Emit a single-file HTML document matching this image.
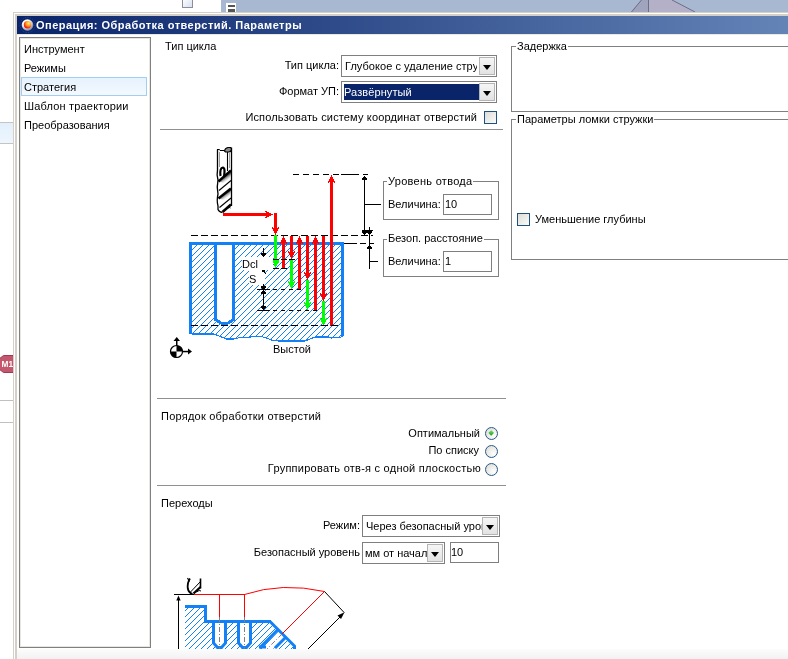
<!DOCTYPE html>
<html><head><meta charset="utf-8">
<style>
*{margin:0;padding:0;box-sizing:border-box}
html,body{width:788px;height:659px;overflow:hidden;background:#fff;position:relative;font-family:"Liberation Sans",sans-serif;font-size:11px;color:#000}
.a{position:absolute}
.t{position:absolute;white-space:nowrap;line-height:13px;height:13px}
.r{text-align:right}
.combo{position:absolute;border:1px solid #7f7f7f;background:#fff}
.btn{position:absolute;top:1px;right:1px;width:16px;bottom:1px;border:1px solid #b5b5b5;background:linear-gradient(#f6f6f6,#e2e2e2)}
.btn:after{content:"";position:absolute;left:3px;top:7px;border-left:4.5px solid transparent;border-right:4.5px solid transparent;border-top:5px solid #000}
.gb{position:absolute;border:1px solid #808080}
.gl{position:absolute;background:#fff;padding:0 1px;white-space:nowrap;line-height:13px}
.cb{position:absolute;width:13px;height:13px;border:1px solid #1c5180;background:linear-gradient(135deg,#dcdcd7,#fbfbf9)}
.rad{position:absolute;width:13px;height:13px;border-radius:50%;border:1.6px solid #2a5888;background:radial-gradient(circle at 70% 70%,#fff,#d8d8d2)}
.sep{position:absolute;height:1px;background:#909090}
.inp{position:absolute;border:1px solid #7f7f7f;background:#fff}
</style></head><body>
<div id="root" style="position:absolute;left:0;top:0;width:788px;height:659px;will-change:transform;overflow:hidden">

<!-- background outside window -->
<div class="a" style="left:221px;top:0;width:567px;height:12px;background:#a8b8d0"></div>
<svg class="a" style="left:0;top:0" width="788" height="12">
  <polygon points="631,12 641,0 648,0 648,12" fill="#a0a4bc"/>
  <polygon points="648,0 672,0 695,12 648,12" fill="#b4b0c8"/>
  <line x1="631.5" y1="12" x2="641.5" y2="0" stroke="#6a6e88" stroke-width="1"/>
  <line x1="648.5" y1="0" x2="648.5" y2="12" stroke="#6a6e88" stroke-width="1"/>
  <line x1="672" y1="0" x2="695" y2="12" stroke="#6a6e88" stroke-width="1"/>
</svg>
<div class="a" style="left:182px;top:-2px;width:11px;height:10px;border:1px solid #8c8c9c;background:linear-gradient(135deg,#fff,#d8e0f0)"></div>
<div class="a" style="left:226px;top:3px;width:10px;height:9px;background:#fff"></div>
<div class="a" style="left:228px;top:5px;width:7px;height:2px;background:#555"></div>
<div class="a" style="left:228px;top:9px;width:7px;height:3px;background:#555"></div>
<div class="a" style="left:0;top:122px;width:13px;height:22px;background:linear-gradient(#e2f0fc,#eef6fd);border-top:1px solid #c4c4c4;border-bottom:1px solid #c4c4c4"></div>
<svg class="a" style="left:0;top:354px" width="13" height="20">
  <polygon points="-1,5 3.5,1.5 14,1.5 14,18.5 3.5,18.5 -1,15" fill="#c4566e" stroke="#9c3c54" stroke-width="1"/>
  <text x="1.6" y="12.8" font-family="Liberation Sans" font-weight="bold" font-size="8.3" fill="#fff">M1</text>
</svg>
<div class="a" style="left:0;top:400px;width:13px;height:1px;background:#c0c0c0"></div>
<div class="a" style="left:0;top:422px;width:13px;height:1px;background:#c0c0c0"></div>

<!-- window frame -->
<div class="a" style="left:13px;top:12px;width:775px;height:647px;background:#d4d0c8"></div>
<div class="a" style="left:14px;top:13px;width:774px;height:646px;background:#fff"></div>
<div class="a" style="left:15px;top:14px;width:773px;height:645px;background:#d4d0c8"></div>
<div class="a" style="left:17px;top:16px;width:771px;height:643px;background:#fff"></div>
<div class="a" style="left:17px;top:34px;width:771px;height:1px;background:#ece9e0"></div>

<!-- title bar -->
<div class="a" style="left:17px;top:16px;width:771px;height:18px;background:linear-gradient(90deg,#0a246a 0px,#a6caf0 1340px)"></div>
<svg class="a" style="left:17px;top:16px" width="20" height="18">
  <defs>
    <radialGradient id="ball" cx="0.65" cy="0.3" r="0.75">
      <stop offset="0" stop-color="#fff070"/><stop offset="0.45" stop-color="#ff9a20"/><stop offset="1" stop-color="#e80000"/>
    </radialGradient>
    <radialGradient id="ring" cx="0.4" cy="0.35" r="0.6">
      <stop offset="0.5" stop-color="#ffffff"/><stop offset="1" stop-color="#8a96b4"/>
    </radialGradient>
  </defs>
  <circle cx="10.5" cy="9" r="7.5" fill="none" stroke="#3a5090" stroke-width="0.8" stroke-dasharray="1 1.5"/>
  <circle cx="10.5" cy="9" r="5.8" fill="url(#ring)"/>
  <circle cx="10.5" cy="8.8" r="3.7" fill="url(#ball)"/>
</svg>
<div class="t" style="left:36px;top:19px;color:#fff;font-weight:bold;letter-spacing:0.47px">Операция: Обработка отверстий. Параметры</div>

<!-- list box -->
<div class="a" style="left:19px;top:37px;width:132px;height:611px;border:1px solid #808080;background:#fff">
  <div class="a" style="left:0;top:0;right:0;bottom:0;border:1px solid #e8e6df"></div>
</div>
<div class="a" style="left:21px;top:77px;width:126px;height:19px;border:1px solid #a4cdf4;background:linear-gradient(#e6f2fd,#f3f9fe)"></div>
<div class="t" style="left:24px;top:43px">Инструмент</div>
<div class="t" style="left:24px;top:62px">Режимы</div>
<div class="t" style="left:24px;top:81px">Стратегия</div>
<div class="t" style="left:24px;top:100px;letter-spacing:0.18px">Шаблон траектории</div>
<div class="t" style="left:24px;top:119px">Преобразования</div>

<!-- Тип цикла -->
<div class="t" style="left:165px;top:40px">Тип цикла</div>
<div class="t r" style="left:200px;width:139px;top:59px">Тип цикла:</div>
<div class="combo" style="left:341px;top:55px;width:156px;height:22px"><div class="t" style="left:3px;top:4px;width:132px;overflow:hidden;letter-spacing:0.04px">Глубокое с удаление стружки</div><div class="btn"></div></div>
<div class="t r" style="left:200px;width:139px;top:85px">Формат УП:</div>
<div class="combo" style="left:341px;top:81px;width:156px;height:22px"><div class="a" style="left:2px;top:2px;width:135px;height:16px;background:#0a246a"></div><div class="t" style="left:2px;top:4px;color:#fff;letter-spacing:0.1px">Развёрнутый</div><div class="btn"></div></div>
<div class="t r" style="left:200px;width:277px;top:111px;letter-spacing:0.15px">Использовать систему координат отверстий</div>
<div class="cb" style="left:484px;top:111px"></div>
<div class="sep" style="left:160px;top:129px;width:343px"></div>

<!-- Diagram -->
<svg class="a" style="left:0;top:0" width="788" height="659">
<g shape-rendering="crispEdges">
<defs><pattern id="hatch" patternUnits="userSpaceOnUse" x="0" y="0" width="6" height="6"><rect x="0" y="3" width="1" height="1" fill="#1480f6"/><rect x="1" y="2" width="1" height="1" fill="#1480f6"/><rect x="2" y="1" width="1" height="1" fill="#1480f6"/><rect x="3" y="0" width="1" height="1" fill="#1480f6"/><rect x="4" y="5" width="1" height="1" fill="#1480f6"/><rect x="5" y="4" width="1" height="1" fill="#1480f6"/></pattern></defs>
<polygon points="189,242 344,242 344,335 343,336 340,337.5 331,338 329,337 315,337 305,341 279,341 273,340.5 265,337.5 261,336.5 240,337.5 234,339 226.5,339 214,334 192,334 190,333.5" fill="url(#hatch)" shape-rendering="crispEdges"/>
<polyline points="343,336 340,337.5 331,338 329,337 315,337 305,341 279,341 273,340.5 265,337.5 261,336.5 240,337.5 234,339 226.5,339 214,334 192,334 190,333.5" fill="none" stroke="#1480f6" stroke-width="1.1"/>
<path d="M217 245 V319 L223 322.5 H226 L232 319 V245 Z" fill="#fff"/>
<path d="M215.5 244 V319.5 L221 323 H228 L233.5 319.5 V244" fill="none" stroke="#1480f6" stroke-width="3"/>
<rect x="189" y="242" width="155" height="3" fill="#1480f6"/>
<rect x="189" y="242" width="3" height="92" fill="#1480f6"/>
<rect x="341" y="242" width="3" height="94" fill="#1480f6"/>
<rect x="191" y="235" width="7" height="1" fill="#000"/>
<rect x="201" y="235" width="7" height="1" fill="#000"/>
<rect x="211" y="235" width="7" height="1" fill="#000"/>
<rect x="221" y="235" width="7" height="1" fill="#000"/>
<rect x="231" y="235" width="7" height="1" fill="#000"/>
<rect x="241" y="235" width="7" height="1" fill="#000"/>
<rect x="251" y="235" width="7" height="1" fill="#000"/>
<rect x="261" y="235" width="7" height="1" fill="#000"/>
<rect x="271" y="235" width="7" height="1" fill="#000"/>
<rect x="281" y="235" width="7" height="1" fill="#000"/>
<rect x="291" y="235" width="7" height="1" fill="#000"/>
<rect x="301" y="235" width="7" height="1" fill="#000"/>
<rect x="311" y="235" width="7" height="1" fill="#000"/>
<rect x="321" y="235" width="7" height="1" fill="#000"/>
<rect x="331" y="235" width="7" height="1" fill="#000"/>
<rect x="341" y="235" width="7" height="1" fill="#000"/>
<rect x="351" y="235" width="7" height="1" fill="#000"/>
<rect x="361" y="235" width="7" height="1" fill="#000"/>
<rect x="371" y="235" width="2" height="1" fill="#000"/>
<rect x="293" y="174" width="6" height="1" fill="#000"/>
<rect x="303" y="174" width="6" height="1" fill="#000"/>
<rect x="313" y="174" width="6" height="1" fill="#000"/>
<rect x="323" y="174" width="6" height="1" fill="#000"/>
<rect x="333" y="174" width="6" height="1" fill="#000"/>
<rect x="343" y="174" width="6" height="1" fill="#000"/>
<rect x="353" y="174" width="6" height="1" fill="#000"/>
<rect x="363" y="174" width="5" height="1" fill="#000"/>
<rect x="344" y="243" width="13" height="1" fill="#000"/>
<rect x="360" y="243" width="6" height="1" fill="#000"/>
<rect x="369" y="243" width="5" height="1" fill="#000"/>
<rect x="242" y="257" width="31" height="13" fill="#fff"/>
<rect x="249" y="270" width="16" height="15" fill="#fff"/>
<rect x="223" y="213" width="47" height="3" fill="#ff0000"/>
<path d="M265 211h1v1h-1zM265 213h1v3h-1zM265 217h1v1h-1zM266 211h1v7h-1zM267 212h1v5h-1zM268 212h1v5h-1zM269 213h1v3h-1zM270 213h1v3h-1zM271 214h1v1h-1zM272 214h1v1h-1z" fill="#ff0000"/>
<rect x="274" y="213" width="3" height="19" fill="#ff0000"/>
<path d="M272 227h1v1h-1zM274 227h3v1h-3zM278 227h1v1h-1zM272 228h7v1h-7zM273 229h5v1h-5zM273 230h5v1h-5zM274 231h3v1h-3zM274 232h3v1h-3zM275 233h1v1h-1zM275 234h1v1h-1z" fill="#ff0000"/>
<rect x="274" y="235" width="3" height="24" fill="#00ff00"/>
<path d="M273 260h6v1h-6zM273 261h6v1h-6zM273 262h6v1h-6zM274 263h4v1h-4zM274 264h3v1h-3zM274 265h3v1h-3zM275 266h1v1h-1zM275 267h1v1h-1z" fill="#00ff00"/>
<rect x="282" y="239" width="3" height="30" fill="#ff0000"/>
<path d="M280 243h1v1h-1zM282 243h3v1h-3zM286 243h1v1h-1zM280 242h7v1h-7zM281 241h5v1h-5zM281 240h5v1h-5zM282 239h3v1h-3zM282 238h3v1h-3zM283 237h1v1h-1zM283 236h1v1h-1z" fill="#ff0000"/>
<rect x="290" y="236" width="3" height="20" fill="#ff0000"/>
<path d="M288 251h1v1h-1zM290 251h3v1h-3zM294 251h1v1h-1zM288 252h7v1h-7zM289 253h5v1h-5zM289 254h5v1h-5zM290 255h3v1h-3zM290 256h3v1h-3zM291 257h1v1h-1zM291 258h1v1h-1z" fill="#ff0000"/>
<rect x="290" y="260" width="3" height="26" fill="#00ff00"/>
<path d="M288 281h1v1h-1zM290 281h3v1h-3zM294 281h1v1h-1zM288 282h7v1h-7zM289 283h5v1h-5zM289 284h5v1h-5zM290 285h3v1h-3zM290 286h3v1h-3zM291 287h1v1h-1zM291 288h1v1h-1z" fill="#00ff00"/>
<rect x="298" y="239" width="3" height="51" fill="#ff0000"/>
<path d="M296 243h1v1h-1zM298 243h3v1h-3zM302 243h1v1h-1zM296 242h7v1h-7zM297 241h5v1h-5zM297 240h5v1h-5zM298 239h3v1h-3zM298 238h3v1h-3zM299 237h1v1h-1zM299 236h1v1h-1z" fill="#ff0000"/>
<rect x="306" y="236" width="3" height="41" fill="#ff0000"/>
<path d="M304 272h1v1h-1zM306 272h3v1h-3zM310 272h1v1h-1zM304 273h7v1h-7zM305 274h5v1h-5zM305 275h5v1h-5zM306 276h3v1h-3zM306 277h3v1h-3zM307 278h1v1h-1zM307 279h1v1h-1z" fill="#ff0000"/>
<rect x="306" y="280" width="3" height="27" fill="#00ff00"/>
<path d="M304 302h1v1h-1zM306 302h3v1h-3zM310 302h1v1h-1zM304 303h7v1h-7zM305 304h5v1h-5zM305 305h5v1h-5zM306 306h3v1h-3zM306 307h3v1h-3zM307 308h1v1h-1zM307 309h1v1h-1z" fill="#00ff00"/>
<rect x="314" y="239" width="3" height="72" fill="#ff0000"/>
<path d="M312 243h1v1h-1zM314 243h3v1h-3zM318 243h1v1h-1zM312 242h7v1h-7zM313 241h5v1h-5zM313 240h5v1h-5zM314 239h3v1h-3zM314 238h3v1h-3zM315 237h1v1h-1zM315 236h1v1h-1z" fill="#ff0000"/>
<rect x="322" y="236" width="3" height="62" fill="#ff0000"/>
<path d="M320 293h1v1h-1zM322 293h3v1h-3zM326 293h1v1h-1zM320 294h7v1h-7zM321 295h5v1h-5zM321 296h5v1h-5zM322 297h3v1h-3zM322 298h3v1h-3zM323 299h1v1h-1zM323 300h1v1h-1z" fill="#ff0000"/>
<rect x="322" y="301" width="3" height="22" fill="#00ff00"/>
<path d="M320 318h1v1h-1zM322 318h3v1h-3zM326 318h1v1h-1zM320 319h7v1h-7zM321 320h5v1h-5zM321 321h5v1h-5zM322 322h3v1h-3zM322 323h3v1h-3zM323 324h1v1h-1zM323 325h1v1h-1z" fill="#00ff00"/>
<rect x="330" y="178" width="3" height="148" fill="#ff0000"/>
<path d="M328 182h1v1h-1zM330 182h3v1h-3zM334 182h1v1h-1zM328 181h7v1h-7zM329 180h5v1h-5zM329 179h5v1h-5zM330 178h3v1h-3zM330 177h3v1h-3zM331 176h1v1h-1zM331 175h1v1h-1z" fill="#ff0000"/>
<rect x="191" y="325" width="7" height="1" fill="#000"/>
<rect x="201" y="325" width="7" height="1" fill="#000"/>
<rect x="211" y="325" width="7" height="1" fill="#000"/>
<rect x="221" y="325" width="7" height="1" fill="#000"/>
<rect x="231" y="325" width="7" height="1" fill="#000"/>
<rect x="241" y="325" width="7" height="1" fill="#000"/>
<rect x="251" y="325" width="7" height="1" fill="#000"/>
<rect x="261" y="325" width="7" height="1" fill="#000"/>
<rect x="271" y="325" width="7" height="1" fill="#000"/>
<rect x="281" y="325" width="7" height="1" fill="#000"/>
<rect x="291" y="325" width="7" height="1" fill="#000"/>
<rect x="301" y="325" width="7" height="1" fill="#000"/>
<rect x="311" y="325" width="7" height="1" fill="#000"/>
<rect x="321" y="325" width="7" height="1" fill="#000"/>
<rect x="331" y="325" width="7" height="1" fill="#000"/>
<rect x="257" y="289" width="13" height="1" fill="#000"/>
<rect x="273" y="289" width="4" height="1" fill="#000"/>
<rect x="281" y="289" width="4" height="1" fill="#000"/>
<rect x="289" y="289" width="4" height="1" fill="#000"/>
<rect x="297" y="289" width="4" height="1" fill="#000"/>
<rect x="257" y="310" width="13" height="1" fill="#000"/>
<rect x="273" y="310" width="4" height="1" fill="#000"/>
<rect x="281" y="310" width="4" height="1" fill="#000"/>
<rect x="289" y="310" width="4" height="1" fill="#000"/>
<rect x="297" y="310" width="4" height="1" fill="#000"/>
<rect x="305" y="310" width="4" height="1" fill="#000"/>
<rect x="313" y="310" width="4" height="1" fill="#000"/>
<rect x="273" y="259" width="6" height="1" fill="#000"/>
<rect x="281" y="259" width="6" height="1" fill="#000"/>
<rect x="289" y="259" width="6" height="1" fill="#000"/>
<rect x="273" y="268" width="6" height="1" fill="#000"/>
<rect x="281" y="268" width="6" height="1" fill="#000"/>
<rect x="263" y="248" width="1" height="6" fill="#000"/>
<path d="M261 253h5v1h-5zM261 254h5v1h-5zM262 255h3v1h-3zM263 256h1v1h-1z" fill="#000"/>
<rect x="263" y="284" width="1" height="26" fill="#000"/>
<path d="M261 286h5v1h-5zM261 287h5v1h-5zM262 288h3v1h-3zM263 289h1v1h-1z" fill="#000"/>
<path d="M261 293h5v1h-5zM261 292h5v1h-5zM262 291h3v1h-3zM263 290h1v1h-1z" fill="#000"/>
<path d="M261 306h5v1h-5zM261 307h5v1h-5zM262 308h3v1h-3zM263 309h1v1h-1z" fill="#000"/>
<rect x="262" y="270" width="3" height="2" fill="#000"/>
<rect x="264" y="272" width="1" height="1" fill="#000"/>
<rect x="265" y="273" width="1" height="1" fill="#000"/>
<rect x="364" y="176" width="1" height="58" fill="#000"/>
<path d="M362 179h5v1h-5zM362 178h5v1h-5zM363 177h3v1h-3zM364 176h1v1h-1z" fill="#000"/>
<rect x="365" y="204" width="16" height="1" fill="#000"/>
<rect x="362" y="230" width="11" height="1" fill="#000"/>
<path d="M362 231h5v1h-5zM362 232h5v1h-5zM363 233h3v1h-3zM364 234h1v1h-1z" fill="#000"/>
<rect x="369" y="227" width="1" height="42" fill="#000"/>
<path d="M367 231h5v1h-5zM367 232h5v1h-5zM368 233h3v1h-3zM369 234h1v1h-1z" fill="#000"/>
<path d="M367 248h5v1h-5zM367 247h5v1h-5zM368 246h3v1h-3zM369 245h1v1h-1z" fill="#000"/>
<rect x="369" y="261" width="9" height="1" fill="#000"/>
<rect x="341" y="174" width="18" height="1" fill="#000"/>

</g>
<!-- drill -->
<defs>
  <linearGradient id="fl" gradientUnits="userSpaceOnUse" x1="225" y1="176" x2="228.5" y2="181">
    <stop offset="0" stop-color="#000"/><stop offset="0.35" stop-color="#999"/><stop offset="1" stop-color="#fff" stop-opacity="0"/>
  </linearGradient>
  <linearGradient id="fl2" gradientUnits="userSpaceOnUse" x1="225" y1="193" x2="228.5" y2="198">
    <stop offset="0" stop-color="#000"/><stop offset="0.35" stop-color="#999"/><stop offset="1" stop-color="#fff" stop-opacity="0"/>
  </linearGradient>
</defs>
<g fill="none" stroke="#000">
  <path d="M217.5 149.5 V170 Q216.5 175 218 180 Q216.5 187 218 194 Q216.5 201 218 206 V209.5 Q219 212 222.5 212.5" stroke-width="1.3"/>
  <path d="M231.5 147.5 V206" stroke-width="1.3"/>
  <path d="M217 149.5 H219.5 L220 150.5 H224.5" />
  <path d="M224.5 151 Q225 148 228 147.5 H230.5 L231.5 149 Q231.5 151.5 229 152 H225.5 Z" fill="#8c8c8c" stroke-width="1.2"/>
  <line x1="219.5" y1="152" x2="219.5" y2="167" stroke="#9a9a9a"/>
  <line x1="227.5" y1="152" x2="227.5" y2="171" stroke-width="1.1"/>
  <line x1="229.5" y1="152" x2="229.5" y2="168" stroke="#a0a0a0"/>
  <path d="M220.5 176 Q219.5 168 223 167.5 Q224.8 168 224.5 172 L224 177" stroke-width="2.2"/>
  <path d="M220 182 L231 172 L231 178 L224 183 Z" fill="url(#fl)" stroke="none"/>
  <path d="M218.5 181.5 L231 170.5" stroke-width="2.6"/>
  <path d="M219 190.5 L231 180.5" stroke-width="1.1"/>
  <path d="M220 199 L231 189.5 L231 195 L224 200 Z" fill="url(#fl2)" stroke="none"/>
  <path d="M218.5 198.5 L231 188.5" stroke-width="2.6"/>
  <path d="M219.5 207.5 L231 198" stroke-width="1.1"/>
  <path d="M222.5 212 L231 204.5" stroke-width="2.6"/>
  <path d="M226 209.5 Q229.5 206.5 230.5 208" stroke-width="1"/>
</g>
<!-- axis symbol -->
<g>
  <circle cx="176.5" cy="351.5" r="6" fill="#fff" stroke="#000" stroke-width="1.2"/>
  <path d="M176.5 351.5 V345.5 A6 6 0 0 1 182.5 351.5 Z" fill="#000"/>
  <path d="M176.5 351.5 V357.5 A6 6 0 0 1 170.5 351.5 Z" fill="#000"/>
  <rect x="176" y="340" width="1.5" height="6" fill="#000"/>
  <path d="M173.5 341 L176.75 337 L180 341 Z" fill="#000"/>
  <rect x="182" y="350.8" width="7" height="1.5" fill="#000"/>
  <path d="M188 348.5 L192 351.5 L188 354.5 Z" fill="#000"/>
</g>
</svg>
<div class="t" style="left:242px;top:258px">Dcl</div>
<div class="t" style="left:249px;top:273px">S</div>
<div class="t" style="left:273px;top:343px">Выстой</div>
<div class="gb" style="left:383px;top:181px;width:116px;height:39px"></div>
<div class="gl" style="left:387px;top:175px;letter-spacing:0.28px">Уровень отвода</div>
<div class="t" style="left:388px;top:198px">Величина:</div>
<div class="inp" style="left:443px;top:194px;width:49px;height:21px"><div class="t" style="left:1px;top:3px">10</div></div>
<div class="gb" style="left:383px;top:239px;width:116px;height:38px"></div>
<div class="gl" style="left:387px;top:232px">Безоп. расстояние</div>
<div class="t" style="left:388px;top:255px">Величина:</div>
<div class="inp" style="left:443px;top:251px;width:49px;height:21px"><div class="t" style="left:1px;top:3px">1</div></div>


<!-- right panel -->
<div class="gb" style="left:511px;top:46px;width:290px;height:66px"></div>
<div class="gl" style="left:516px;top:40px">Задержка</div>
<div class="gb" style="left:511px;top:119px;width:290px;height:141px"></div>
<div class="gl" style="left:516px;top:113px">Параметры ломки стружки</div>
<div class="cb" style="left:517px;top:213px"></div>
<div class="t" style="left:535px;top:213px">Уменьшение глубины</div>

<!-- Порядок -->
<div class="sep" style="left:157px;top:398px;width:349px"></div>
<div class="t" style="left:161px;top:410px;letter-spacing:0.23px">Порядок обработки отверстий</div>
<div class="t r" style="left:200px;width:280px;top:427px">Оптимальный</div>
<div class="rad" style="left:485px;top:427px"><div class="a" style="left:2.7px;top:2.7px;width:4.4px;height:4.4px;background:linear-gradient(135deg,#7ae07a,#18a018);border-radius:0.5px;transform:rotate(45deg)"></div></div>
<div class="t r" style="left:200px;width:279px;top:444px">По списку</div>
<div class="rad" style="left:485px;top:445px"></div>
<div class="t r" style="left:200px;width:281px;top:462px;letter-spacing:0.25px">Группировать отв-я с одной плоскостью</div>
<div class="rad" style="left:485px;top:463px"></div>
<div class="sep" style="left:157px;top:485px;width:349px"></div>

<!-- Переходы -->
<div class="t" style="left:161px;top:497px">Переходы</div>
<div class="t r" style="left:200px;width:160px;top:519px">Режим:</div>
<div class="combo" style="left:362px;top:515px;width:138px;height:22px"><div class="t" style="left:3px;top:4px;width:116px;overflow:hidden">Через безопасный уровень</div><div class="btn"></div></div>
<div class="t r" style="left:200px;width:160px;top:546px">Безопасный уровень</div>
<div class="combo" style="left:362px;top:542px;width:83px;height:22px"><div class="t" style="left:2px;top:4px;width:62px;overflow:hidden">мм от начала</div><div class="btn"></div></div>
<div class="inp" style="left:450px;top:542px;width:49px;height:21px"><div class="t" style="left:0px;top:3px">10</div></div>


<!-- bottom diagram -->
<svg class="a" style="left:0;top:570px" width="788" height="79" viewBox="0 570 788 79">
  <polygon points="185,608 204,608 204,623 271,623 296,648 296,649 185,649" fill="url(#hatch)" shape-rendering="crispEdges"/>
  <g fill="#fff" stroke="none">
    <path d="M215 622 V643 L218 646 H221 L224 643 V622 Z"/>
    <path d="M240 622 V643 L243 646 H246 L249 643 V622 Z"/>
    <polygon points="262,649 273,649 284.5,636.5 279,631"/>
  </g>
  <g fill="#1480f6" shape-rendering="crispEdges">
    <rect x="185" y="605" width="22" height="3"/>
    <rect x="204" y="605" width="3" height="18"/>
    <rect x="204" y="620" width="67" height="3"/>
  </g>
  <g fill="none" stroke="#1480f6" stroke-width="3">
    <path d="M213.5 622 V643 L217.5 647.5 H221.5 L225.5 643 V622"/>
    <path d="M238.5 622 V643 L242.5 647.5 H246.5 L250.5 643 V622"/>
    <path d="M270 621.5 L294.5 646 V650"/>
    <path d="M259.5 648 L277.5 630"/>
    <path d="M275 648 L286 637"/>
    <path d="M259 647 H266"/>
  </g>
  <g shape-rendering="crispEdges">
    <rect x="174" y="594" width="20" height="1" fill="#000"/>
    <rect x="194" y="594" width="51" height="1" fill="#f00"/>
    <rect x="219" y="594" width="1" height="23" fill="#f00"/>
    <rect x="244" y="594" width="1" height="23" fill="#f00"/>
    <rect x="178" y="598" width="1" height="51" fill="#000"/>
  </g>
  <path d="M176.3 600.5 H180.7 L178.5 595.5 Z" fill="#000"/>
  <g stroke="#808080" stroke-width="1" stroke-dasharray="5 2 1 2">
    <line x1="219.5" y1="617" x2="219.5" y2="649"/>
    <line x1="244.5" y1="617" x2="244.5" y2="649"/>
    <line x1="282" y1="634" x2="267" y2="649"/>
  </g>
  <g fill="none" stroke-width="1">
    <path d="M244.5 594.5 Q282 582 324.5 591.5" stroke="#f00"/>
    <line x1="324.5" y1="591.5" x2="282" y2="634" stroke="#f00"/>
    <line x1="324.5" y1="591.5" x2="344.2" y2="612.6" stroke="#000"/>
    <line x1="308" y1="649" x2="343" y2="614" stroke="#000"/>
  </g>
  <path d="M344.5 612.3 L337.5 615.5 L341 619 Z" fill="#000"/>
  <g fill="none" stroke="#000">
    <path d="M190 578.5 Q187.2 582.5 187.8 588.5 Q188.5 592.5 192.5 594" stroke-width="1.8"/>
    <path d="M187.5 578 L189.5 581.5" stroke-width="1.2"/>
    <path d="M200.5 578.5 V588.5" stroke-width="1.6"/>
    <path d="M190.5 592 L200.5 581.5" stroke-width="1"/>
    <path d="M193.5 593.5 L200.5 587" stroke-width="2.3"/>
    <path d="M196.5 592 Q199.5 589.5 201 591" stroke-width="1"/>
  </g>
</svg>
<div class="a" style="left:17px;top:649px;width:771px;height:10px;background:linear-gradient(#fcfcfc,#f2f2f2)"></div>
</div>
</body></html>
